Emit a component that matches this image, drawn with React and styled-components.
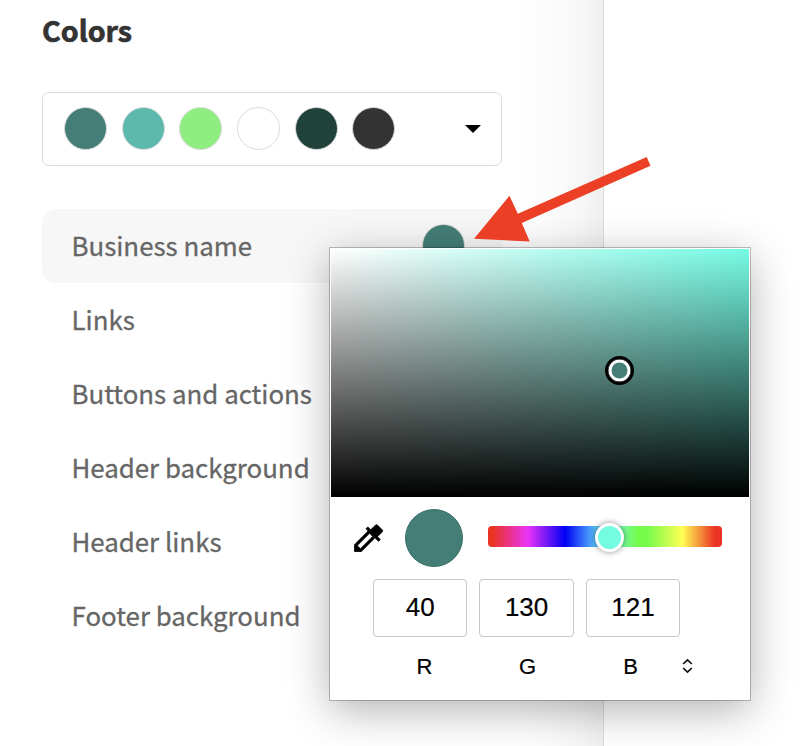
import styled, {createGlobalStyle} from 'styled-components';

const GlobalStyle = createGlobalStyle`
    * {
        box-sizing: border-box;
    }

    body {
        margin: 0;
        background: #fff;
        overflow: hidden;
    }
`;

const Page = styled.div`
    position: relative;
    display: flex;
    width: 802px;
    height: 746px;
    overflow: hidden;
    font-family: "Noto Sans CJK SC", "Open Sans", sans-serif;
`;

const Sidebar = styled.aside`
    width: 604px;
    height: 100%;
    padding: 10px 101px 0 42px;
    border-right: 1px solid #dcdcdc;
    background: linear-gradient(to right, #fff 518px, #fcfcfc 550px, #f8f8f8 576px, #f0f0f0 603px);
`;

const Title = styled.h2`
    margin: 0 0 42px;
    font-size: 28.6px;
    line-height: 40px;
    font-weight: 700;
    color: #333;
    -webkit-text-stroke: .7px #333;
`;

const PaletteSelect = styled.div`
    display: flex;
    align-items: center;
    justify-content: space-between;
    width: 460px;
    height: 74px;
    padding: 0 20px 1px 21px;
    border: 1px solid #dcdcdc;
    border-radius: 7px;
    background: #fff;
`;

const Swatches = styled.div`
    display: flex;
    gap: 14.65px;
`;

const Swatch = styled.span`
    width: 43px;
    height: 43px;
    border: 1px solid #d9dbdb;
    border-radius: 50%;
    background: ${({$color}) => $color};
`;

const Caret = styled.span`
    border: 8px solid transparent;
    border-top-color: #000;
    border-bottom-width: 0;
`;

const OptionList = styled.ul`
    width: 460px;
    margin: 43px 0 0;
    padding: 0;
    list-style: none;
`;

const Option = styled.li`
    display: flex;
    align-items: center;
    justify-content: space-between;
    height: 74px;
    padding: 0 37px 2px 29.5px;
    border-radius: 14px;
    background: ${({$active}) => $active ? '#f7f7f7' : 'transparent'};
    font-size: 25.85px;
    line-height: 38px;
    color: #666;
    -webkit-text-stroke: .3px #666;
    white-space: nowrap;
`;

const Popover = styled.div`
    position: absolute;
    left: 330px;
    top: 248px;
    width: 420px;
    height: 452px;
    padding: 1px;
    background: #fff;
    box-shadow: 0 0 0 1px rgba(0, 0, 0, .24), 0 10px 40px rgba(0, 0, 0, .31);
`;

const ColorArea = styled.div`
    position: relative;
    height: 248px;
    background:
        linear-gradient(to top, #000, transparent),
        linear-gradient(to right, #fff, #75fbe4);
`;

const AreaHandle = styled.span`
    position: absolute;
    left: 274px;
    top: 107px;
    width: 29px;
    height: 29px;
    border: 3px solid #000;
    border-radius: 50%;
    background: #447e77;
    box-shadow: inset 0 0 0 .5px #000, inset 0 0 0 3.5px #fff;
`;

const Controls = styled.div`
    display: flex;
    align-items: center;
    height: 82px;
    padding-left: 18.5px;
`;

const Dropper = styled.svg`
    width: 36px;
    height: 36px;
    fill: #000;
    stroke: #000;
    stroke-width: .25;
`;

const Preview = styled.span`
    width: 58px;
    height: 58px;
    margin: 0 25px 0 19.5px;
    border: 1px solid #3a716b;
    border-radius: 50%;
    background: #447e77;
`;

const HueTrack = styled.div`
    position: relative;
    width: 234px;
    height: 21px;
    margin-top: -3px;
    border-radius: 4px;
    background: linear-gradient(to right, #ea3323 2%, #ea33f7 17%, #0000f5 33%, #75fbfd 50%, #75fb4c 64%, #75fb4c 68%, #ffff54 83%, #ea3323 97%);
`;

const HueHandle = styled.span`
    position: absolute;
    left: 107px;
    top: -3px;
    width: 29px;
    height: 29px;
    border: 3px solid #fff;
    border-radius: 50%;
    background: #75fbe0;
    box-shadow: 0 0 6px rgba(0, 0, 0, .45);
`;

const Fields = styled.div`
    display: flex;
    gap: 12px;
    padding-left: 42px;
`;

const Field = styled.div`
    width: 94.4px;
    height: 58px;
    border: 1px solid #c8c8c8;
    border-radius: 4px;
    font: 26px/54px "Liberation Sans", Arial, sans-serif;
    color: #000;
    text-align: center;
    -webkit-text-stroke: .2px #000;
`;

const Labels = styled.div`
    display: flex;
    align-items: center;
    height: 58px;
    padding-left: 42px;
`;

const Label = styled.span`
    width: 103px;
    padding-top: 2px;
    font: 22px/30px "Liberation Sans", Arial, sans-serif;
    color: #000;
    text-align: center;
    -webkit-text-stroke: .2px #000;
`;

const Stepper = styled.svg`
    width: 11px;
    height: 14px;
    fill: none;
    stroke: #111;
    stroke-width: 1.7;
`;

const Pointer = styled.svg`
    position: absolute;
    left: 470px;
    top: 150px;
    width: 190px;
    height: 96px;
    fill: #eb4025;
`;

const palette = ['#447e77', '#5db8ae', '#8eee80', '#ffffff', '#20423b', '#333333'];

const options = [
    'Business name',
    'Links',
    'Buttons and actions',
    'Header background',
    'Header links',
    'Footer background',
];

const channels = [
    {name: 'R', value: 40},
    {name: 'G', value: 130},
    {name: 'B', value: 121},
];

function ColorPicker () {
    return (
        <Popover>
            <ColorArea>
                <AreaHandle />
            </ColorArea>
            <Controls>
                <Dropper viewBox="0 0 24 24">
                    {/* solid bulb and collar, then the hollow glass tube */}
                    <path d="M20.71 5.63l-2.34-2.34a1 1 0 0 0-1.41 0l-3.12 3.12-1.93-1.91-1.41 1.41 1.42 1.42 5.65 5.65 1.42 1.42 1.41-1.41-1.92-1.92 3.12-3.12c.4-.4.4-1.03.01-1.42z" />
                    <path fillRule="evenodd" d="M12.02 7.23 3 16.25V21h4.75l8.92-8.92zM6.92 19 5 17.08l8.06-8.06 1.92 1.92z" />
                    <path d="M3 16.5 7.5 21H3z" />
                </Dropper>
                <Preview />
                <HueTrack>
                    <HueHandle />
                </HueTrack>
            </Controls>
            <Fields>
                {channels.map(({name, value}) => <Field key={name}>{value}</Field>)}
            </Fields>
            <Labels>
                {channels.map(({name}) => <Label key={name}>{name}</Label>)}
                <Stepper viewBox="0 0 11 14">
                    <path d="M1.2 5 5.5.9 9.8 5M1.2 9l4.3 4.1L9.8 9" />
                </Stepper>
            </Labels>
        </Popover>
    )
}

function App () {
    return (
        <>
            <GlobalStyle />
            <Page>
                <Sidebar>
                    <Title>Colors</Title>
                    <PaletteSelect>
                        <Swatches>
                            {palette.map((color) => <Swatch key={color} $color={color} />)}
                        </Swatches>
                        <Caret />
                    </PaletteSelect>
                    <OptionList>
                        {options.map((option, index) => (
                            <Option key={option} $active={index === 0}>
                                {option}
                                {index === 0 && <Swatch $color={palette[0]} />}
                            </Option>
                        ))}
                    </OptionList>
                </Sidebar>
                <ColorPicker />
                <Pointer viewBox="470 150 190 96">
                    <path d="M474 238.8 509.5 195.7 517.8 213.7 646.7 157 650.5 165.8 521.8 223 529.7 241.5Z" />
                </Pointer>
            </Page>
        </>
    )
}

export default App;
